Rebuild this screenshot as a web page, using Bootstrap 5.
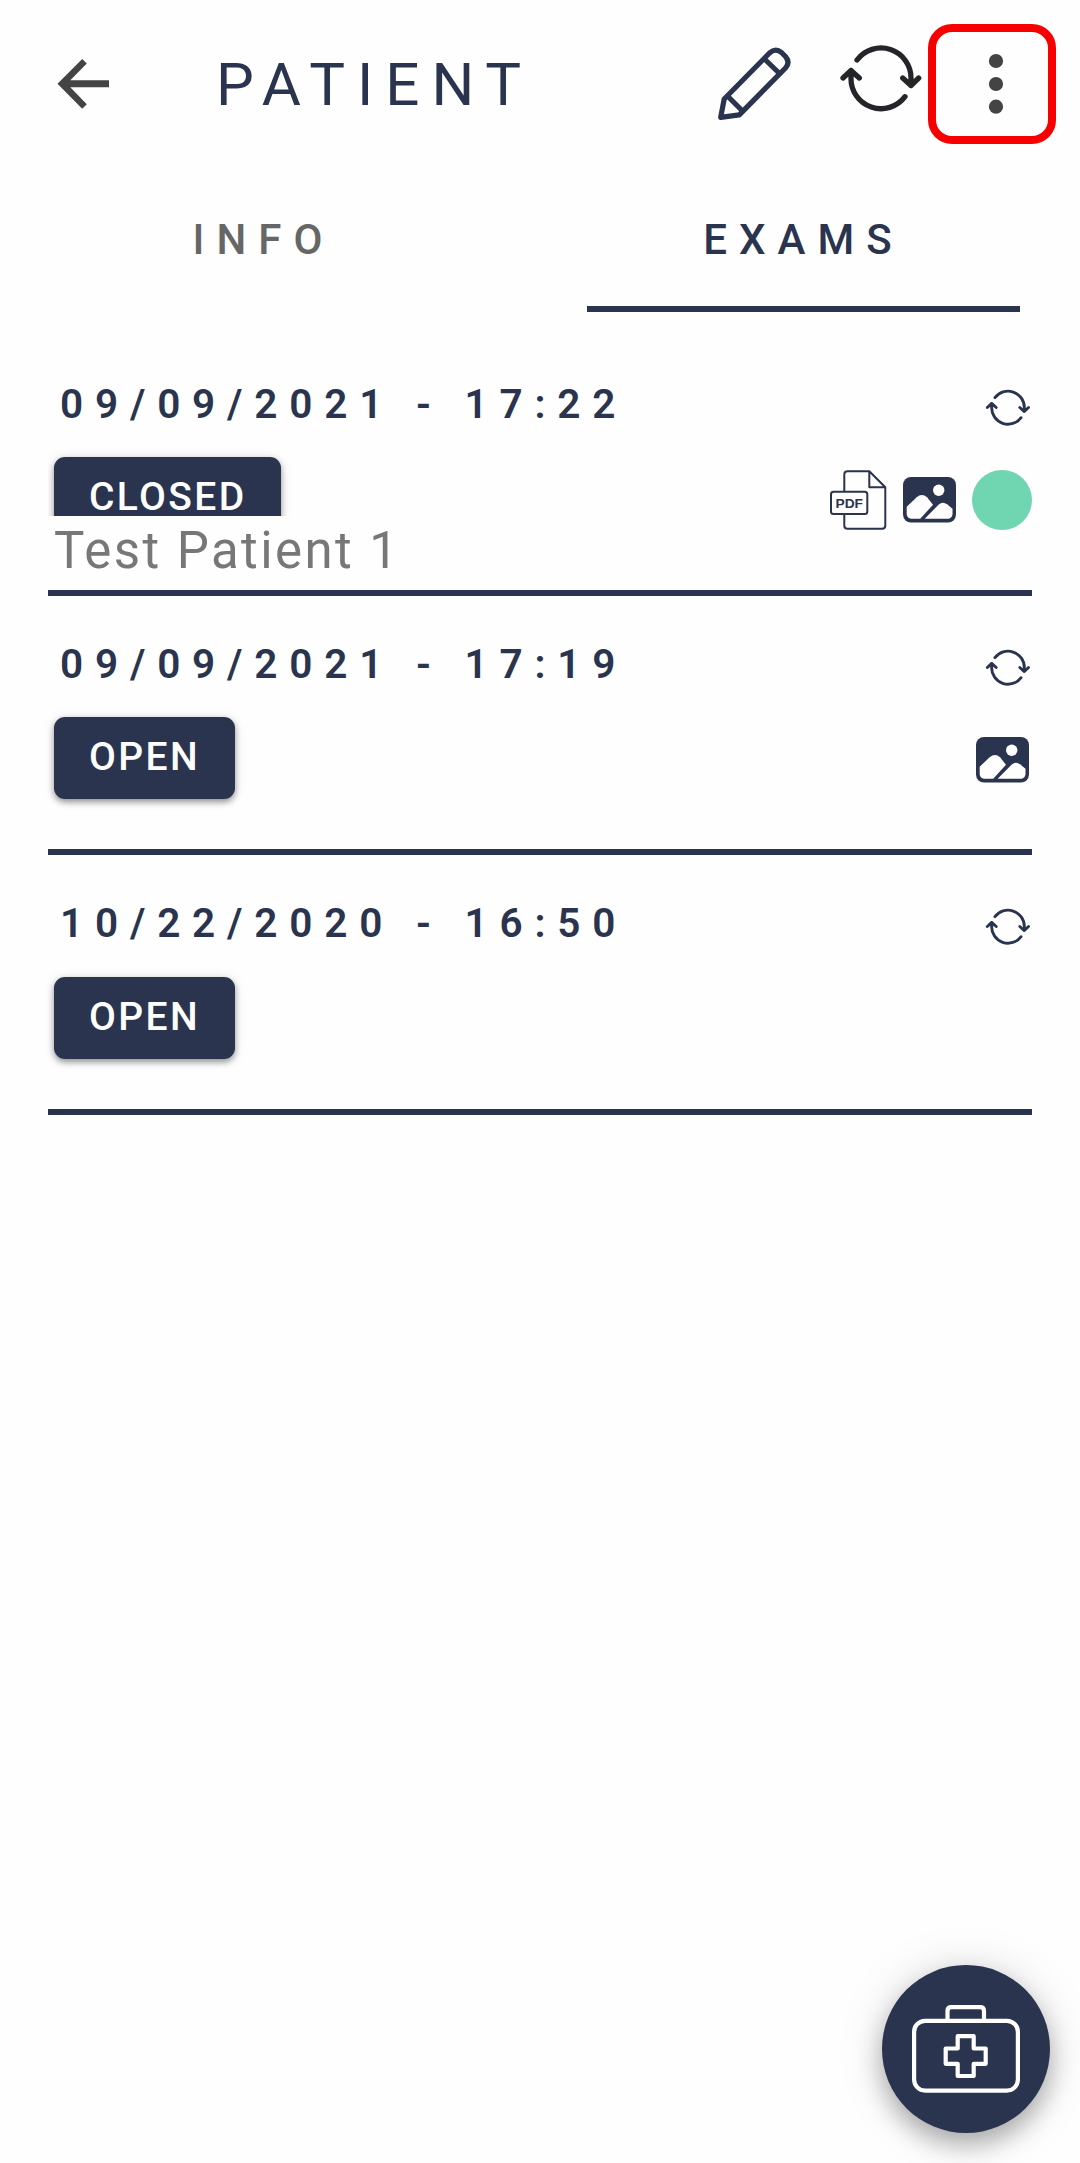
<!DOCTYPE html>
<html lang="en">
<head>
<meta charset="utf-8">
<meta name="viewport" content="width=device-width, initial-scale=1">
<title>Patient</title>
<link href="https://cdn.jsdelivr.net/npm/bootstrap@5.3.0/dist/css/bootstrap.min.css" rel="stylesheet">
<style>
  :root { --navy: #2a344f; }
  body { font-family: Roboto, "Liberation Sans", sans-serif; background: #fefefe; color: var(--navy); }
  .screen { width: 1080px; height: 2163px; }
  svg { display: block; flex: none; }
  .topbar { height: 168px; padding: 0 24px 0 57px; }
  .screen-title { font-size: 60px; line-height: 72px; letter-spacing: 12px; margin-left: 107px; padding-top: 1px; font-weight: 400; }
  .edit-btn { margin-right: 49px; }
  .sync-btn { margin-right: 6px; padding-bottom: 12px; }
  .menu-btn { width: 128px; height: 120px; border: 8px solid #f90000; border-radius: 24px; padding-left: 8px; }
  .tabs { height: 144px; padding: 0 60px 0 47px; }
  .tabs .nav-link { width: 433px; height: 144px; padding: 42px 0 0; font-size: 42px; line-height: 60px; font-weight: 500; letter-spacing: 12px; color: #666; border-radius: 0; text-align: center; }
  .tabs .nav-link.active { color: var(--navy); border-bottom: 6px solid var(--navy); }
  .exam-list { margin: 24px 48px 0; }
  .exam { height: 260px; padding: 43px 0 0; border-bottom: 6px solid var(--navy); }
  .exam.short { height: 259px; }
  .exam-date { font-size: 40.5px; line-height: 50px; letter-spacing: 11.82px; font-weight: 600; padding-left: 12px; margin-bottom: 28px; white-space: nowrap; }
  .status-wrap { padding-left: 6px; }
  .status-wrap.cut { height: 59px; clip-path: inset(-20px -20px 0 0); }
  .exam:last-child .status-wrap { padding-top: 1px; }
  .status-btn { height: 82px; padding: 0 34.5px 1px 35px; border: 0; border-radius: 11px; background: var(--navy); color: #fff; font-size: 39px; line-height: 79px; font-weight: 500; letter-spacing: 2.4px; box-shadow: 0 3px 6px rgba(0,0,0,.4), 0 1px 14px rgba(0,0,0,.08); }
  .patient-name { font-size: 51px; line-height: 60px; letter-spacing: 2.4px; color: #777; padding: 5px 0 0 6px; }
  .exam-side { padding-top: 10px; }
  .exam-sync { margin: 0 1px 44px 0; }
  .dot { width: 60px; height: 60px; background: #6fd6b1; }
  .side-icons { height: 60px; gap: 16px; }
  .lone { padding-right: 3px; }
  .fab { width: 168px; height: 168px; border: 0; background: var(--navy); box-shadow: 0 12px 24px rgba(0,0,0,.28), 0 2px 48px rgba(0,0,0,.13); margin: 0 30px 30px 0; }
  .pdf-tag { font: 700 13.6px "Liberation Sans", sans-serif; }
</style>
</head>
<body>
<svg width="0" height="0" class="position-absolute" aria-hidden="true">
  <symbol id="sync" viewBox="840 44 82 68">
    <g fill="none" stroke="currentColor" stroke-width="5.3" stroke-linecap="round" stroke-linejoin="round">
      <path d="M857 60A30 30 0 0 1 911 78V85.5M902.7 78L911 85.5L918.7 78"/>
      <path d="M905 96.7A30 30 0 0 1 851 78V70.5M843 78L851 70.5L859.3 78"/>
    </g>
  </symbol>
  <symbol id="photo" viewBox="0 0 53 46">
    <rect width="53" height="45.6" rx="8" fill="currentColor"/>
    <g fill="#fefefe">
      <circle cx="35.7" cy="13.3" r="5.7"/>
      <path d="M3.7 29.7L13.7 20.2Q19 15.6 24 20.3L30 27.8L17.2 41.7H8Q4.5 41.5 3.7 37.5Z"/>
      <path d="M21.7 41.7L35.5 27.8Q39.7 24 44 27.3L49.5 31.7V37.5Q48.5 41.5 45.5 41.7Z"/>
    </g>
  </symbol>
</svg>

<div class="screen d-flex flex-column">
  <header class="topbar d-flex align-items-center">
    <svg width="52" height="52" viewBox="57 58 52 52"><path fill="#444" d="M57.5 83.8L82.2 59L86.8 63.5L70.3 80.2H109V87.2H70.3L86.8 104.2L82.2 108.7Z"/></svg>
    <h1 class="screen-title mb-0 me-auto">PATIENT</h1>
    <svg class="edit-btn" width="74" height="74" viewBox="717 47 74 74" fill="none" stroke="#2a344f" stroke-width="5.2">
      <path d="M720.7 117.3L724.2 99L769.5 53Q775.5 47.5 781.5 52.5L785.5 56.5Q790.5 62.5 785.5 68L739.3 114.8Z" stroke-linejoin="round"/>
      <path d="M765 59.5L779.5 73.5M728 96.5L742 110.5"/>
    </svg>
    <svg class="sync-btn" width="82" height="80" viewBox="0 0 82 68" color="#232529" preserveAspectRatio="xMidYMin"><use href="#sync" width="82" height="68"/></svg>
    <div class="menu-btn d-flex align-items-center justify-content-center">
      <svg width="16" height="62" viewBox="0 0 16 62" fill="#444"><circle cx="8" cy="8" r="7.1"/><circle cx="8" cy="31" r="7.1"/><circle cx="8" cy="53.7" r="7.1"/></svg>
    </div>
  </header>

  <nav class="tabs nav justify-content-between">
    <a class="nav-link" href="#">INFO</a>
    <a class="nav-link active" href="#">EXAMS</a>
  </nav>

  <main class="exam-list">
    <section class="exam d-flex justify-content-between">
      <div>
        <div class="exam-date">09/09/2021 - 17:22</div>
        <div class="status-wrap cut"><button class="btn status-btn">CLOSED</button></div>
        <div class="patient-name">Test Patient 1</div>
      </div>
      <div class="exam-side d-flex flex-column align-items-end">
        <svg class="exam-sync" width="46" height="37"><use href="#sync"/></svg>
        <div class="side-icons d-flex align-items-center">
          <svg width="57" height="60" viewBox="0 0 57 60" fill="none" stroke="#2a344f" stroke-width="2" stroke-linejoin="round">
            <path d="M14.3 21V4.5Q14.3 1.2 17.5 1.2H39.3L55.3 17.3V55.5Q55.3 58.8 52 58.8H17.5Q14.3 58.8 14.3 55.5V45M39.3 1.2V17.3H55.3"/>
            <rect x="1" y="21.8" width="36.3" height="22.3" rx="2.5"/>
            <text class="pdf-tag" x="5.5" y="38" textLength="27.5" lengthAdjust="spacingAndGlyphs" fill="#2a344f" stroke="none">PDF</text>
          </svg>
          <svg width="53" height="46"><use href="#photo"/></svg>
          <span class="dot rounded-circle"></span>
        </div>
      </div>
    </section>
    <section class="exam short d-flex justify-content-between">
      <div>
        <div class="exam-date">09/09/2021 - 17:19</div>
        <div class="status-wrap"><button class="btn status-btn">OPEN</button></div>
      </div>
      <div class="exam-side d-flex flex-column align-items-end">
        <svg class="exam-sync" width="46" height="37"><use href="#sync"/></svg>
        <div class="side-icons lone d-flex align-items-center">
          <svg width="53" height="46"><use href="#photo"/></svg>
        </div>
      </div>
    </section>
    <section class="exam d-flex justify-content-between">
      <div>
        <div class="exam-date">10/22/2020 - 16:50</div>
        <div class="status-wrap"><button class="btn status-btn">OPEN</button></div>
      </div>
      <div class="exam-side d-flex flex-column align-items-end">
        <svg class="exam-sync" width="46" height="37"><use href="#sync"/></svg>
      </div>
    </section>
  </main>

  <button class="fab rounded-circle mt-auto ms-auto d-flex justify-content-center align-items-center p-0" aria-label="Add exam">
    <svg width="108" height="88" viewBox="0 0 108 88" fill="none" stroke="#fefefe" stroke-width="4.2" stroke-linejoin="round">
      <rect x="2.1" y="15.8" width="103.8" height="69.8" rx="11"/>
      <path d="M35.5 15V6Q35.5 2.2 39.3 2.2H68.2Q72 2.2 72 6V15"/>
      <path d="M45.7 31.2H61.7V43.5H73.7V58.8H61.7V71H45.7V58.8H33.7V43.5H45.7Z"/>
    </svg>
  </button>
</div>
<script src="https://cdn.jsdelivr.net/npm/bootstrap@5.3.0/dist/js/bootstrap.bundle.min.js"></script>
</body>
</html>
